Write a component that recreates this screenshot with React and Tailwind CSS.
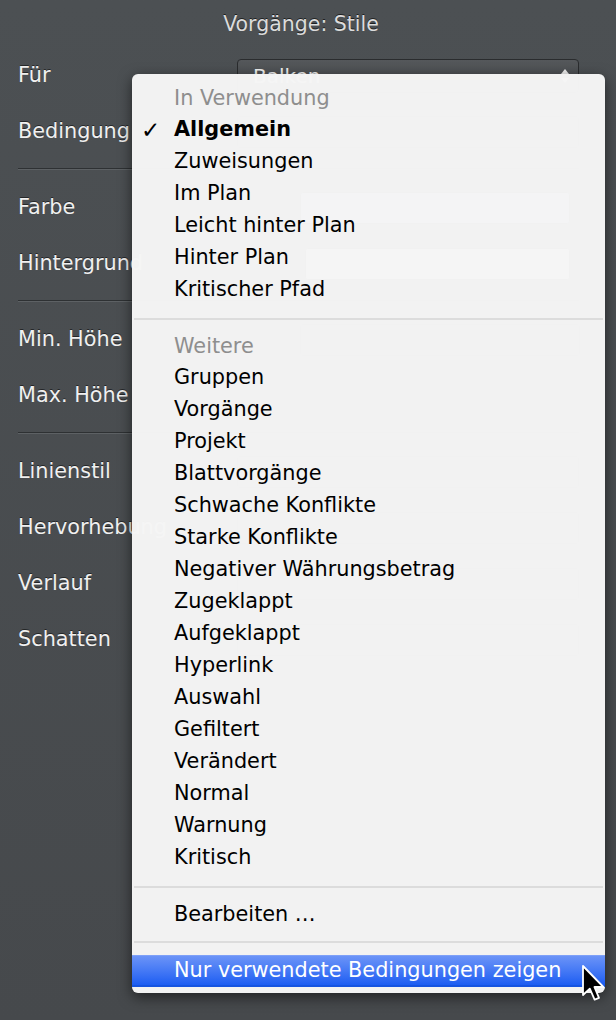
import { useState } from 'react';

const font = { fontFamily: '"DejaVu Sans", "Liberation Sans", sans-serif' };

const inUse = ['Allgemein', 'Zuweisungen', 'Im Plan', 'Leicht hinter Plan', 'Hinter Plan', 'Kritischer Pfad'];
const more = [
  'Gruppen', 'Vorgänge', 'Projekt', 'Blattvorgänge', 'Schwache Konflikte', 'Starke Konflikte',
  'Negativer Währungsbetrag', 'Zugeklappt', 'Aufgeklappt', 'Hyperlink', 'Auswahl', 'Gefiltert',
  'Verändert', 'Normal', 'Warnung', 'Kritisch',
];

const Arrows = () => (
  <svg width="10" height="16" viewBox="0 0 10 16" className="shrink-0">
    <path d="M5 1 L9 6 L1 6 Z" fill="#f0f0f0" />
    <path d="M5 15 L9 10 L1 10 Z" fill="#f0f0f0" />
  </svg>
);

const Popup = ({ value }) => (
  <div className="w-[342px] h-[34px] rounded-[4px] border border-[#2a2c2e] bg-gradient-to-b from-[#55585b] to-[#45484b] flex items-center justify-between pl-[15px] pr-[8px] text-[#f2f2f2] text-[20px]">
    <span>{value}</span>
    <Arrows />
  </div>
);

const Row = ({ label, children }) => (
  <div className="h-14 flex items-center">
    <div className="w-[237px] shrink-0 pl-[18px] text-[#f0f0f0] text-[20.8px] [text-shadow:0_-1px_0_rgba(0,0,0,0.5)] whitespace-nowrap">
      {label}
    </div>
    {children}
  </div>
);

const Sep = () => (
  <div className="h-5 flex flex-col pt-[8px] pl-[18px] pr-[37px]">
    <div className="h-px bg-[#2e3133]" />
    <div className="h-px bg-[#5d6164]" />
  </div>
);

const MenuSep = () => (
  <div className="h-[26px] flex items-center px-[2px]">
    <div className="h-[2px] w-full bg-[#dcdcdc]" />
  </div>
);

const Item = ({ children, checked }) => (
  <div className="h-8 flex items-center text-black text-[20.8px] whitespace-nowrap">
    <span className="w-[42px] pl-[9px] text-[23px] font-bold leading-none">{checked ? '✓' : ''}</span>
    <span className={checked ? 'font-bold' : ''}>{children}</span>
  </div>
);

const Header = ({ children }) => (
  <div className="h-[30px] flex items-center pl-[42px] text-[#8e8e8e] text-[20.8px]">{children}</div>
);

const Well = ({ className }) => (
  <div className={`h-[32px] rounded-[3px] border border-[#2a2c2e] ${className}`} />
);

export default function App() {
  const [selected] = useState('Allgemein');

  return (
    <div style={font} className="relative w-full h-[1020px] overflow-hidden bg-gradient-to-b from-[#4c5053] to-[#46494c]">
      <div className="h-12 flex items-center justify-center pr-[14px] text-[#dcdcdc] text-[20.5px] [text-shadow:0_-1px_0_rgba(0,0,0,0.6)]">
        Vorgänge: Stile
      </div>

      <Row label="Für"><Popup value="Balken" /></Row>
      <Row label="Bedingung"><Well className="w-[342px] bg-[#505356]" /></Row>
      <Sep />
      <Row label="Farbe"><Well className="ml-[63px] w-[270px] bg-[#9cc2ff]" /></Row>
      <Row label="Hintergrund"><Well className="ml-[68px] w-[265px] bg-white" /></Row>
      <Sep />
      <Row label="Min. Höhe"><Well className="ml-[63px] w-[280px] bg-[#5a5d60]" /></Row>
      <Row label="Max. Höhe"><div /></Row>
      <Sep />
      <Row label="Linienstil"><Well className="w-[342px] bg-[#505356]" /></Row>
      <Row label="Hervorhebung"><Well className="w-[342px] bg-[#505356]" /></Row>
      <Row label="Verlauf"><Well className="w-[342px] bg-[#505356]" /></Row>
      <Row label="Schatten"><Well className="w-[342px] bg-[#505356]" /></Row>

      <div className="absolute left-[132px] top-[74px] w-[473px] rounded-[6px] bg-[#f5f5f5]/[0.985] shadow-[0_4px_14px_rgba(0,0,0,0.55)] pt-[10px] pb-[6px]">
        <Header>In Verwendung</Header>
        {inUse.map((name) => (
          <Item key={name} checked={name === selected}>{name}</Item>
        ))}
        <MenuSep />
        <Header>Weitere</Header>
        {more.map((name) => (
          <Item key={name}>{name}</Item>
        ))}
        <MenuSep />
        <div className="h-[29px] flex items-center pl-[42px] text-black text-[20.8px]">Bearbeiten …</div>
        <MenuSep />
        <div className="h-8 flex items-center pl-[42px] text-white text-[20.8px] bg-gradient-to-b from-[#6b93f7] to-[#1b5cf2] border-t border-[#7ea0f8] border-b-2 border-b-[#1553e0]">
          Nur verwendete Bedingungen zeigen
        </div>
      </div>

      <svg className="absolute left-[581px] top-[964px]" width="26" height="38" viewBox="0 0 13 19">
        <path d="M1 1 L1 15.5 L4.4 12.3 L6.8 17.8 L9 16.9 L6.7 11.5 L11.2 11.5 Z" fill="#000" stroke="#fff" strokeWidth="0.9" strokeLinejoin="round" />
      </svg>
    </div>
  );
}
